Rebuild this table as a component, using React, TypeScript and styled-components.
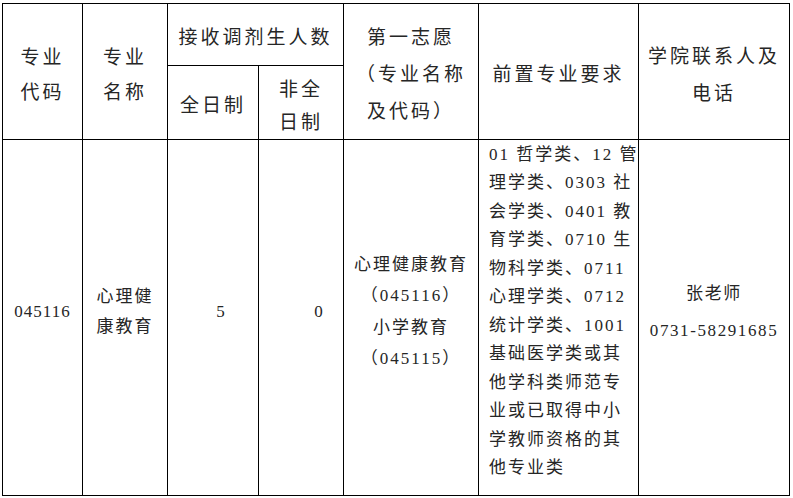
import React from "react";
import styled, { createGlobalStyle } from "styled-components";

type Align = "left" | "center" | "right";

interface HeadCellDef {
	key: string;
	lines: string[];
	rowSpan?: number;
	colSpan?: number;
	lineHeight?: number;
}

interface BodyCellDef {
	key: string;
	lines: string[];
	align?: Align;
	lineHeight?: number;
	spacing?: number;
	shift?: number;
	inset?: number;
}

const fontStack = `"Liberation Serif", "Times New Roman", "Noto Sans CJK SC", serif`;

const columnWidths = [80, 85, 91, 85, 135, 160, 151];

const headTop: HeadCellDef[] = [
	{ key: "code", lines: ["专业", "代码"], rowSpan: 2, lineHeight: 35 },
	{ key: "name", lines: ["专业", "名称"], rowSpan: 2, lineHeight: 35 },
	{ key: "count", lines: ["接收调剂生人数"], colSpan: 2 },
	{ key: "first", lines: ["第一志愿", "（专业名称", "及代码）"], rowSpan: 2, lineHeight: 37 },
	{ key: "require", lines: ["前置专业要求"], rowSpan: 2 },
	{ key: "contact", lines: ["学院联系人及", "电话"], rowSpan: 2, lineHeight: 37 },
];

const headSub: HeadCellDef[] = [
	{ key: "full", lines: ["全日制"] },
	{ key: "part", lines: ["非全", "日制"], lineHeight: 33 },
];

const bodyRow: BodyCellDef[] = [
	{ key: "code", lines: ["045116"], spacing: 1 },
	{ key: "name", lines: ["心理健", "康教育"], lineHeight: 30 },
	{ key: "full", lines: ["5"], shift: 17 },
	{ key: "part", lines: ["0"], shift: 37 },
	{
		key: "first",
		lines: ["心理健康教育", "（045116）", "小学教育", "（045115）"],
		lineHeight: 31.5,
	},
	{
		key: "require",
		align: "left",
		lineHeight: 28.5,
		inset: 10,
		lines: [
			"01 哲学类、12 管",
			"理学类、0303 社",
			"会学类、0401 教",
			"育学类、0710 生",
			"物科学类、0711",
			"心理学类、0712",
			"统计学类、1001",
			"基础医学类或其",
			"他学科类师范专",
			"业或已取得中小",
			"学教师资格的其",
			"他专业类",
		],
	},
	{ key: "contact", lines: ["张老师", "0731-58291685"], lineHeight: 37, spacing: 1.6 },
];

function renderLines(lines: string[]) {
	return lines.map((line) => <Line key={line}>{line}</Line>);
}

export default function App() {
	return (
		<>
			<GlobalStyle />
			<Page>
				<Sheet>
					<colgroup>
						{columnWidths.map((width, index) => (
							<col key={index} style={{ width }} />
						))}
					</colgroup>
					<thead>
						<HeadRow $height={62}>
							{headTop.map((cell) => (
								<HeadCell
									key={cell.key}
									rowSpan={cell.rowSpan}
									colSpan={cell.colSpan}
									$lineHeight={cell.lineHeight}
								>
									{renderLines(cell.lines)}
								</HeadCell>
							))}
						</HeadRow>
						<HeadRow $height={74}>
							{headSub.map((cell) => (
								<HeadCell key={cell.key} $lineHeight={cell.lineHeight}>
									{renderLines(cell.lines)}
								</HeadCell>
							))}
						</HeadRow>
					</thead>
					<tbody>
						<BodyRow>
							{bodyRow.map((cell) => (
								<BodyCell
									key={cell.key}
									$align={cell.align ?? "center"}
									$lineHeight={cell.lineHeight}
									$spacing={cell.spacing}
									$shift={cell.shift}
									$inset={cell.inset}
								>
									{renderLines(cell.lines)}
								</BodyCell>
							))}
						</BodyRow>
					</tbody>
				</Sheet>
			</Page>
		</>
	);
}

//#region Styled Components

const GlobalStyle = createGlobalStyle`
	html, body {
		margin: 0;
		padding: 0;
		background: #ffffff;
	}
	body {
		font-family: ${fontStack};
		color: #262626;
	}
`;

const Page = styled.div`
	padding: 3px 0 0 2px;
`;

const Sheet = styled.table`
	width: 787px;
	table-layout: fixed;
	border-collapse: collapse;
	border: 1px solid #000;
	font-family: ${fontStack};
	color: #262626;
`;

const HeadRow = styled.tr<{ $height: number }>`
	height: ${(p) => p.$height}px;
`;

const HeadCell = styled.th<{ $lineHeight?: number }>`
	border: 1px solid #000;
	padding: 6px 0 0;
	vertical-align: middle;
	text-align: center;
	font-family: ${fontStack};
	font-size: 19px;
	font-weight: 400;
	letter-spacing: 3px;
	line-height: ${(p) => p.$lineHeight ?? 30}px;
`;

const BodyRow = styled.tr`
	height: 356px;
`;

const BodyCell = styled.td<{
	$align: Align;
	$lineHeight?: number;
	$spacing?: number;
	$shift?: number;
	$inset?: number;
}>`
	border: 1px solid #000;
	padding: 0 0 12px ${(p) => p.$inset ?? p.$shift ?? 0}px;
	vertical-align: middle;
	text-align: ${(p) => p.$align};
	font-family: ${fontStack};
	font-size: 17px;
	font-weight: 400;
	letter-spacing: ${(p) => p.$spacing ?? 2}px;
	line-height: ${(p) => p.$lineHeight ?? 30}px;
	white-space: nowrap;
`;

const Line = styled.div`
	display: block;
`;
//#endregion
